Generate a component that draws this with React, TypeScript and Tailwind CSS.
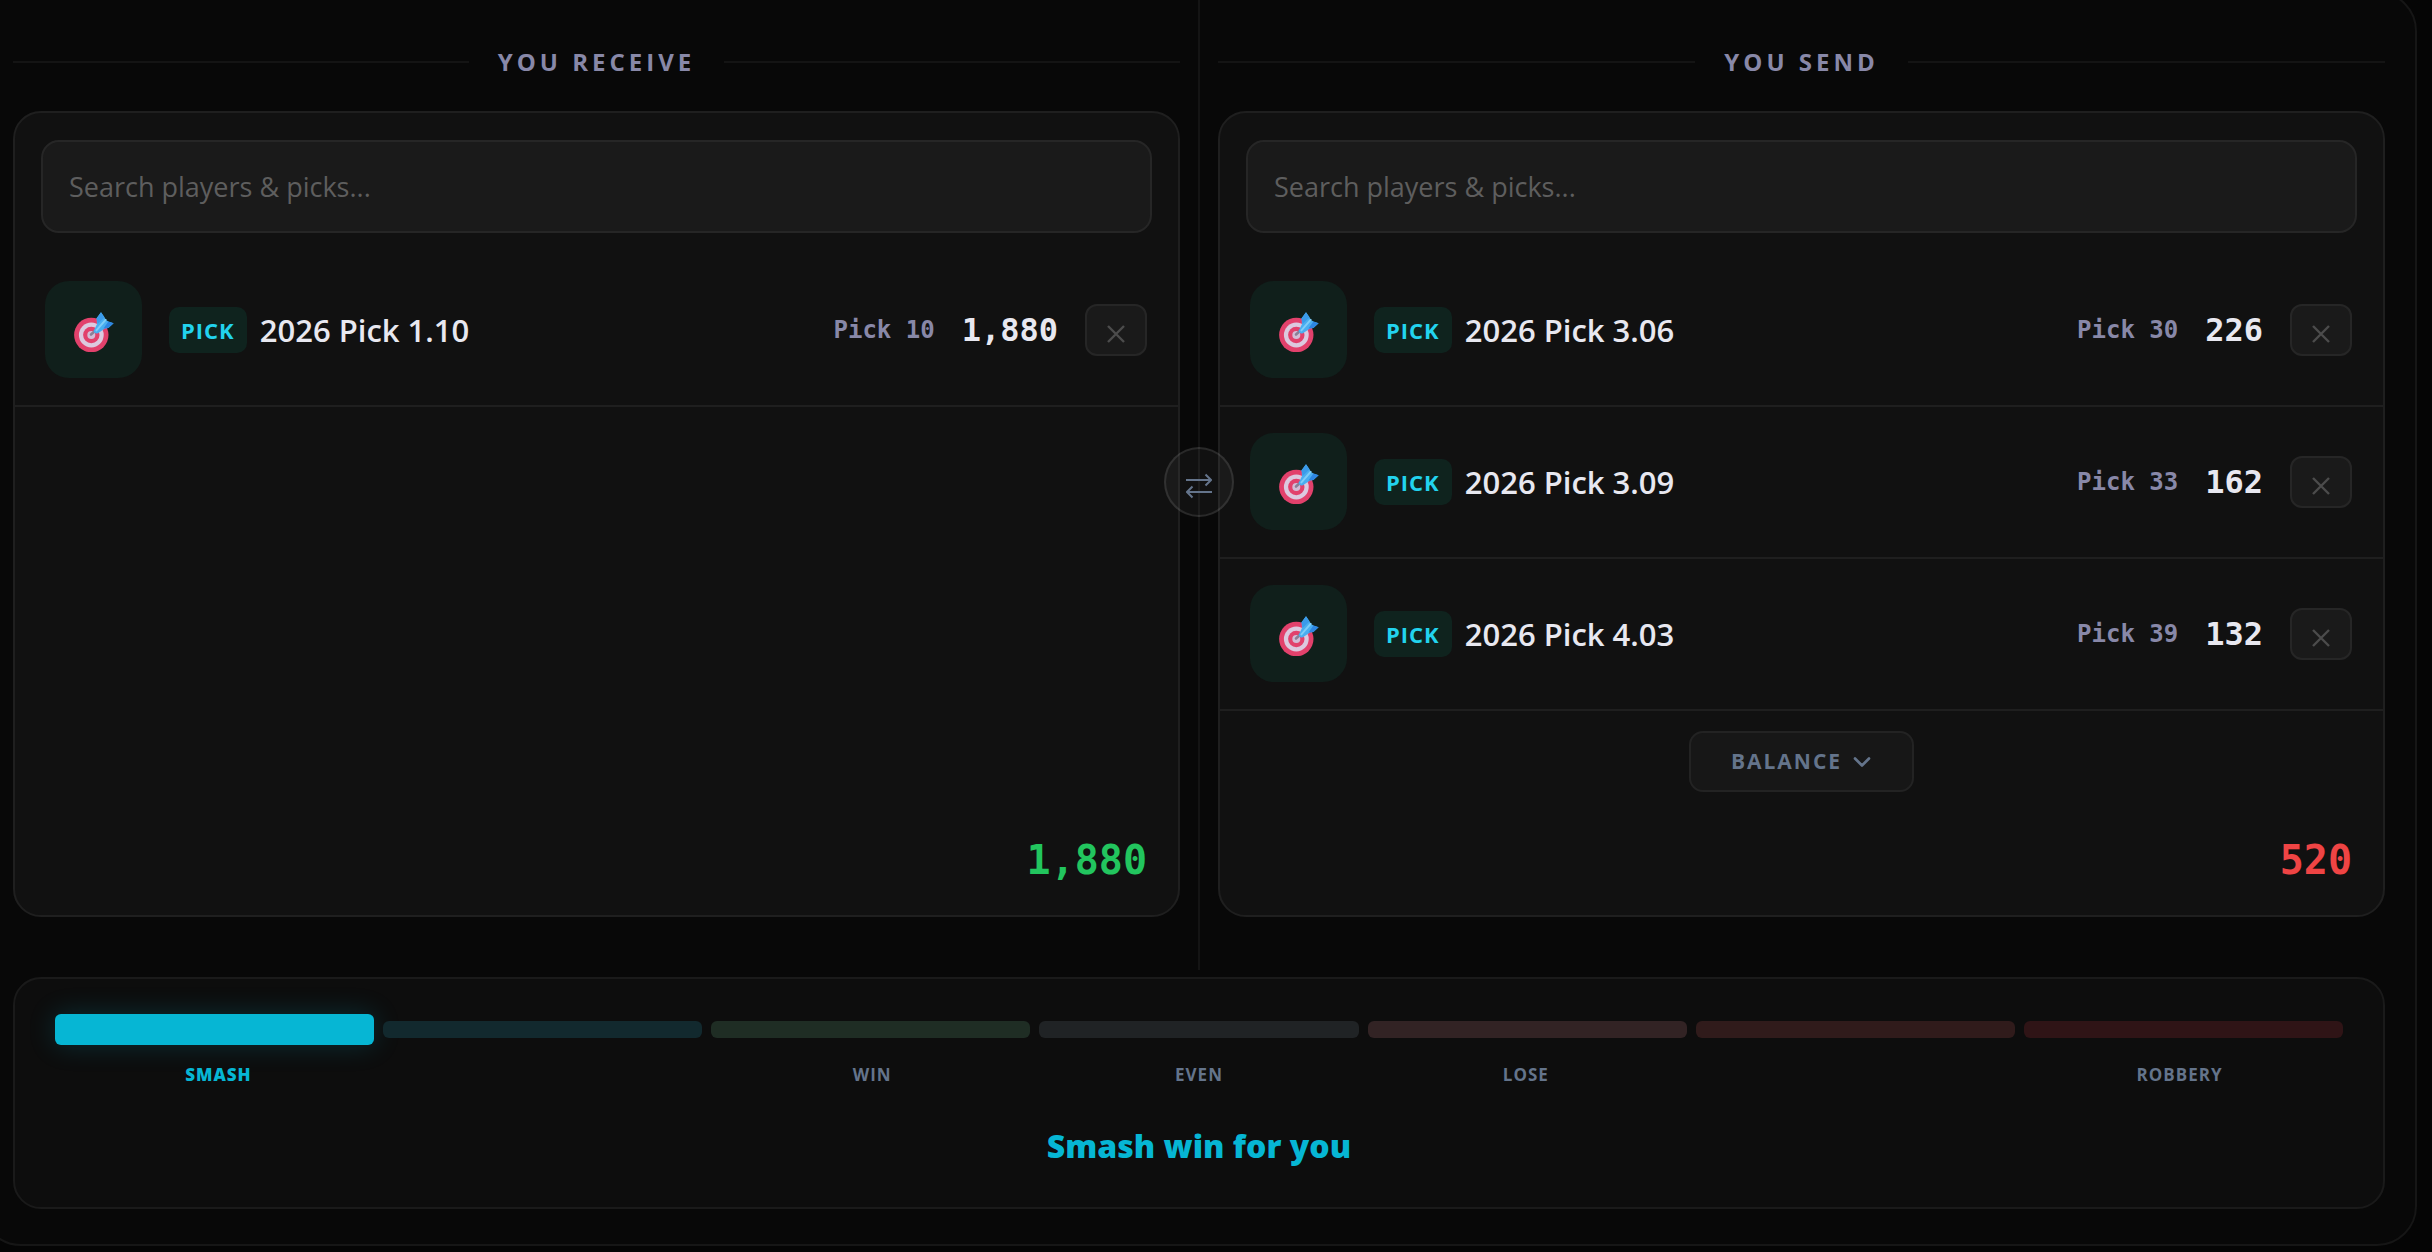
import { ChevronDown } from "lucide-react"
import clsx from "clsx"

interface Asset {
  id: string
  name: string
  slot: string
  value: number
}

interface TradeSideProps {
  title: string
  assets: Asset[]
  winning: boolean
  showBalance?: boolean
}

const received: Asset[] = [{ id: "r1", name: "2026 Pick 1.10", slot: "Pick 10", value: 1880 }]

const sent: Asset[] = [
  { id: "s1", name: "2026 Pick 3.06", slot: "Pick 30", value: 226 },
  { id: "s2", name: "2026 Pick 3.09", slot: "Pick 33", value: 162 },
  { id: "s3", name: "2026 Pick 4.03", slot: "Pick 39", value: 132 },
]

const segments = [
  { label: "SMASH", color: "bg-[#06b6d4]", active: true },
  { label: "", color: "bg-[#12292e]", active: false },
  { label: "WIN", color: "bg-[#1f2d24]", active: false },
  { label: "EVEN", color: "bg-[#202325]", active: false },
  { label: "LOSE", color: "bg-[#322324]", active: false },
  { label: "", color: "bg-[#301b1b]", active: false },
  { label: "ROBBERY", color: "bg-[#2f1416]", active: false },
]

function TargetIcon() {
  return (
    <svg width="40" height="44" viewBox="0 -4 40 44" aria-hidden="true">
      <circle cx="17.3" cy="23" r="17.2" fill="#e2416c" />
      <circle cx="17.3" cy="23" r="12.4" fill="#dcc9df" />
      <circle cx="17.3" cy="23" r="8.2" fill="#e2416c" />
      <circle cx="17.3" cy="23" r="4" fill="#d3bcd6" />
      <path d="M17 22.5 L22 18" stroke="#8a7f96" strokeWidth="2.6" strokeLinecap="round" />
      <path d="M27 0.3 L22.6 6.2 L23 12 L19.6 19 Q20.6 22.4 24 21.2 L31 16.4 L34.4 16 L39.6 11.2 L34.4 9.6 L31.6 7.8 L30.4 5 Z" fill="#4aaef0" />
      <path d="M27 0.3 L22.6 6.2 L23.6 12 L30.4 5.4 Z" fill="#3b9bea" />
      <path d="M39.6 11.2 L34.4 16 L29.4 16.4 L34.4 9.6 Z" fill="#2e86e2" />
      <path d="M22.4 18.4 L31.6 7.8" stroke="#7fcdf8" strokeWidth="2" strokeLinecap="round" />
    </svg>
  )
}

function AssetRow({ asset }: { asset: Asset }) {
  return (
    <li className="flex items-center border-b-2 border-[#1f1f1f] pt-[26px] pr-[31px] pb-[27px] pl-[30px]">
      <div className="flex size-[97px] shrink-0 items-center justify-center rounded-3xl bg-[#101f1b]">
        <TargetIcon />
      </div>
      <span className="ml-[27px] rounded-[10px] bg-[#0f231e] px-3 py-[7px] text-[22px] leading-8 font-bold tracking-[1px] text-[#22d3ee]">
        PICK
      </span>
      <span className="ml-[13px] flex-1 text-[31px] leading-10 font-semibold text-[#e8e8f0]">{asset.name}</span>
      <span className="font-['DejaVu_Sans_Mono',monospace] text-2xl font-bold text-[#8888a8]">{asset.slot}</span>
      <span className="ml-[27px] font-['DejaVu_Sans_Mono',monospace] text-[32px] leading-10 font-bold text-[#e8e8f0]">
        {asset.value.toLocaleString("en-US")}
      </span>
      <button
        type="button"
        aria-label={`Remove ${asset.name}`}
        className="ml-[27px] flex h-[52px] w-[62px] items-center justify-center rounded-xl border-2 border-[#262626] bg-[#1a1a1a] text-[#4c4c4c]"
      >
        <svg width="18" height="28" viewBox="0 0 18 28" fill="none" stroke="currentColor" strokeWidth="2.4" aria-hidden="true">
          <path d="M1 10 L17 26 M17 10 L1 26" />
        </svg>
      </button>
    </li>
  )
}

function TradeSide({ title, assets, winning, showBalance = false }: TradeSideProps) {
  const total = assets.reduce((sum, asset) => sum + asset.value, 0)

  return (
    <section className="flex min-w-0 flex-col pt-[53px] pb-[53px]">
      <div className="mb-[33px] flex items-center gap-[29px]">
        <div className="h-[2px] flex-1 bg-[#141414]" />
        <h2 className="text-2xl leading-8 font-bold tracking-[4px] text-[#8888a8]">{title}</h2>
        <div className="h-[2px] flex-1 bg-[#141414]" />
      </div>

      <div className="flex flex-1 flex-col rounded-[28px] border-2 border-[#1f1f1f] bg-[#111111]">
        <div className="px-[26px] pt-[27px] pb-[22px]">
          <input
            type="text"
            aria-label={`${title}: search players and picks`}
            placeholder="Search players & picks..."
            className="h-[93px] w-full rounded-[18px] border-2 border-[#262626] bg-[#1a1a1a] px-[26px] text-[27px] text-[#e8e8f0] outline-none placeholder:text-[#5e5e5e]"
          />
        </div>

        <ul>
          {assets.map((asset) => (
            <AssetRow key={asset.id} asset={asset} />
          ))}
        </ul>

        {showBalance && (
          <div className="mt-5 flex justify-center">
            <button
              type="button"
              className="flex h-[61px] items-center gap-[6px] rounded-[14px] border-2 border-[#232323] bg-[#171717] pr-[36px] pl-[40px] text-[21px] font-bold tracking-[2px] text-[#64748b]"
            >
              BALANCE
              <ChevronDown className="size-7" strokeWidth={2.3} />
            </button>
          </div>
        )}

        <div
          className={clsx(
            "mt-auto px-[31px] pt-[44px] pb-[31px] text-right font-['DejaVu_Sans_Mono',monospace] text-[40px] leading-[48px] font-bold",
            winning ? "text-[#22c55e]" : "text-[#ef4444]"
          )}
        >
          {total.toLocaleString("en-US")}
        </div>
      </div>
    </section>
  )
}

function SwapDivider() {
  return (
    <div className="relative w-[2px] bg-[#141414]">
      <button
        type="button"
        aria-label="Swap sides"
        className="absolute top-1/2 left-1/2 z-10 flex size-[70px] -translate-x-1/2 -translate-y-1/2 items-center justify-center rounded-full border-2 border-white/10 bg-white/4 text-[#64748b]"
      >
        <svg width="26" height="34" viewBox="0 0 26 34" fill="none" stroke="currentColor" strokeWidth="2" aria-hidden="true">
          <path d="M0 15 H25 M19.5 9.5 L25 15 L19.5 20.5" />
          <path d="M26 27 H1 M6.5 21.5 L1 27 L6.5 32.5" />
        </svg>
      </button>
    </div>
  )
}

function Verdict() {
  return (
    <section className="rounded-[28px] border-2 border-[#1a1a1a] bg-[#0d0d0d] px-10 pt-[35px] pb-[41px]">
      <div className="flex h-[31px] items-center gap-[9px]">
        {segments.map((segment, i) => (
          <div
            key={i}
            className={clsx(
              "flex-1 rounded-md",
              segment.color,
              segment.active ? "h-[31px] shadow-[0_0_28px_rgba(6,182,212,0.2)]" : "h-[17px]"
            )}
          />
        ))}
      </div>
      <div className="mt-[18px] flex h-6">
        {segments.map((segment, i) => (
          <span
            key={i}
            className={clsx(
              "flex-1 text-center text-[17px] leading-6 tracking-[1px]",
              segment.active ? "font-extrabold text-[#06b6d4]" : "font-bold text-[#64748b]"
            )}
          >
            {segment.label}
          </span>
        ))}
      </div>
      <p className="mt-[39px] text-center text-[32px] leading-10 font-extrabold text-[#06b6d4]">Smash win for you</p>
    </section>
  )
}

export default function App() {
  return (
    <div className="min-h-screen overflow-hidden bg-[#050505] font-['Open_Sans','Noto_Sans',sans-serif]">
      <main className="-mt-[9px] mr-[15px] -ml-[19px] rounded-[40px] border-2 border-[#161616] bg-[#080808] px-[30px] pb-[35px]">
        <div className="mb-[7px] grid grid-cols-[1fr_2px_1fr] gap-[18px]">
          <TradeSide title="YOU RECEIVE" assets={received} winning />
          <SwapDivider />
          <TradeSide title="YOU SEND" assets={sent} winning={false} showBalance />
        </div>
        <Verdict />
      </main>
    </div>
  )
}
